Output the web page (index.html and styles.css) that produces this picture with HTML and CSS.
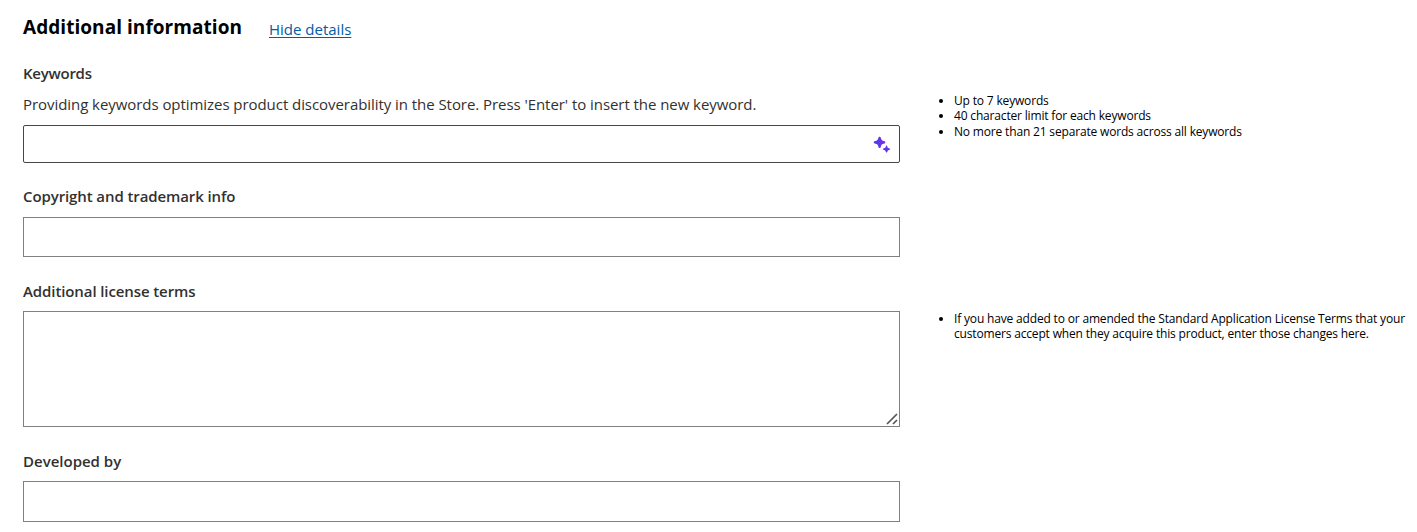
FILE: index.html
```html
<!DOCTYPE html>
<html lang="en">
<head>
<meta charset="utf-8">
<title>Additional information</title>
<link rel="stylesheet" href="styles.css">
</head>
<body>
<main class="page">
  <header class="header">
    <h2 class="title">Additional information</h2>
    <a class="toggle" href="#">Hide details</a>
  </header>
  <section class="row row-keywords">
    <div class="field">
      <label class="label label-keywords" for="keywords">Keywords</label>
      <p class="description">Providing keywords optimizes product discoverability in the Store. Press 'Enter' to insert the new keyword.</p>
      <div class="tag-box">
        <input class="tag-input" id="keywords" type="text">
        <svg class="sparkle" width="18" height="18" viewBox="0 0 18 18" aria-hidden="true">
          <defs><linearGradient id="violet" x1="0" y1="0" x2="1" y2="0"><stop offset="0" stop-color="#4f38ef"/><stop offset="1" stop-color="#7334dc"/></linearGradient></defs>
          <path fill="url(#violet)" d="M6.300 .8h.6q.6 0 .8.800l.5 1.500q.4 1.200 1.600 1.600l1.700.5q.8.200.8.900v.5q0 .700-.8.900l-1.700.5q-1.200.4-1.600 1.600l-.5 1.600q-.2.800-.8.800h-.6q-.6 0-.8-.8l-.5-1.600q-.4-1.200-1.600-1.600l-1.800-.5q-.8-.2-.8-.9v-.5q0-.7.8-.9l1.800-.5q1.200-.4 1.600-1.600l.5-1.500q.2-.8.800-.8z"/>
          <path fill="url(#violet)" d="M13.300 9.500h.5l.9 1.900q.2.500.7.700l1.700.7v.7l-1.700.7q-.5.200-.7.700l-.8 1.700h-.7l-.8-1.700q-.2-.5-.7-.7l-1.800-.7v-.7l1.800-.7q.5-.2.700-.7z"/>
        </svg>
      </div>
    </div>
    <ul class="hints hints-keywords">
      <li>Up to 7 keywords</li>
      <li>40 character limit for each keywords</li>
      <li>No more than 21 separate words across all keywords</li>
    </ul>
  </section>
  <section class="row">
    <div class="field">
      <label class="label label-copyright" for="copyright">Copyright and trademark info</label>
      <input class="input" id="copyright" type="text">
    </div>
  </section>
  <section class="row">
    <div class="field">
      <label class="label label-license" for="license">Additional license terms</label>
      <div class="area-box">
        <textarea class="area" id="license"></textarea>
        <svg class="grip" width="12" height="12" viewBox="0 0 12 12" aria-hidden="true"><path d="M1 11 11 1M7 11l4-4" fill="none" stroke="#555" stroke-width="1.7"/></svg>
      </div>
    </div>
    <ul class="hints hints-license">
      <li>If you have added to or amended the Standard Application License Terms that your customers accept when they acquire this product, enter those changes here.</li>
    </ul>
  </section>
  <section class="row">
    <div class="field">
      <label class="label label-developer" for="developer">Developed by</label>
      <input class="input input-developer" id="developer" type="text">
    </div>
  </section>
</main>
</body>
</html>
```
FILE: styles.css
```css
* { box-sizing: border-box; }
body { margin: 0; background: #fff; color: #323130; font-family: "Open Sans", sans-serif; overflow: hidden; }
.page { padding: 14px 0 0 23px; }
.header { display: flex; align-items: flex-start; height: 49px; gap: 27px; }
.title { margin: 0; width: 219px; white-space: nowrap; color: #000; font-size: 19px; font-weight: 700; line-height: 26px; letter-spacing: .05px; }
.toggle { padding-top: 5px; color: #005da6; font-size: 15px; line-height: 20px; text-underline-offset: 2px; text-decoration-thickness: 1px; }
.row { display: grid; grid-template-columns: 877px 1fr; column-gap: 37px; align-items: start; }
.field { display: flex; flex-direction: column; }
.label { font-size: 15px; font-weight: 600; line-height: 20px; letter-spacing: -.1px; white-space: nowrap; margin-bottom: 10px; }
.label-keywords { margin-bottom: 11px; letter-spacing: -.25px; }
.label-copyright, .label-license, .label-developer { margin-top: 24px; }
.label-copyright { margin-top: 23px; margin-bottom: 11px; }
.label-developer { letter-spacing: 0; }
.description { margin: 0 0 11px; font-size: 15px; line-height: 20px; letter-spacing: -.057px; white-space: nowrap; }
.tag-box { display: flex; align-items: center; height: 38px; padding: 2px 8px 0 10px; border: 1px solid #464649; border-radius: 2px; }
.tag-input { flex: 1; border: 0; outline: 0; background: transparent; font: inherit; }
.sparkle { flex: none; }
.input { height: 40px; border: 1px solid #808080; outline: 0; padding: 0 10px; font: inherit; }
.input-developer { height: 41px; }
.area-box { display: flex; align-items: flex-end; height: 116px; padding: 1px; border: 1px solid #808080; }
.area { flex: 1; height: 100%; border: 0; outline: 0; resize: none; }
.grip { flex: none; }
.hints { margin: 0; padding: 0 0 0 17px; color: #000; font-size: 12px; line-height: 15.5px; letter-spacing: -.17px; }
.hints-keywords { margin-top: 29.7px; }
.hints-license { margin-top: 53.7px; }
```
